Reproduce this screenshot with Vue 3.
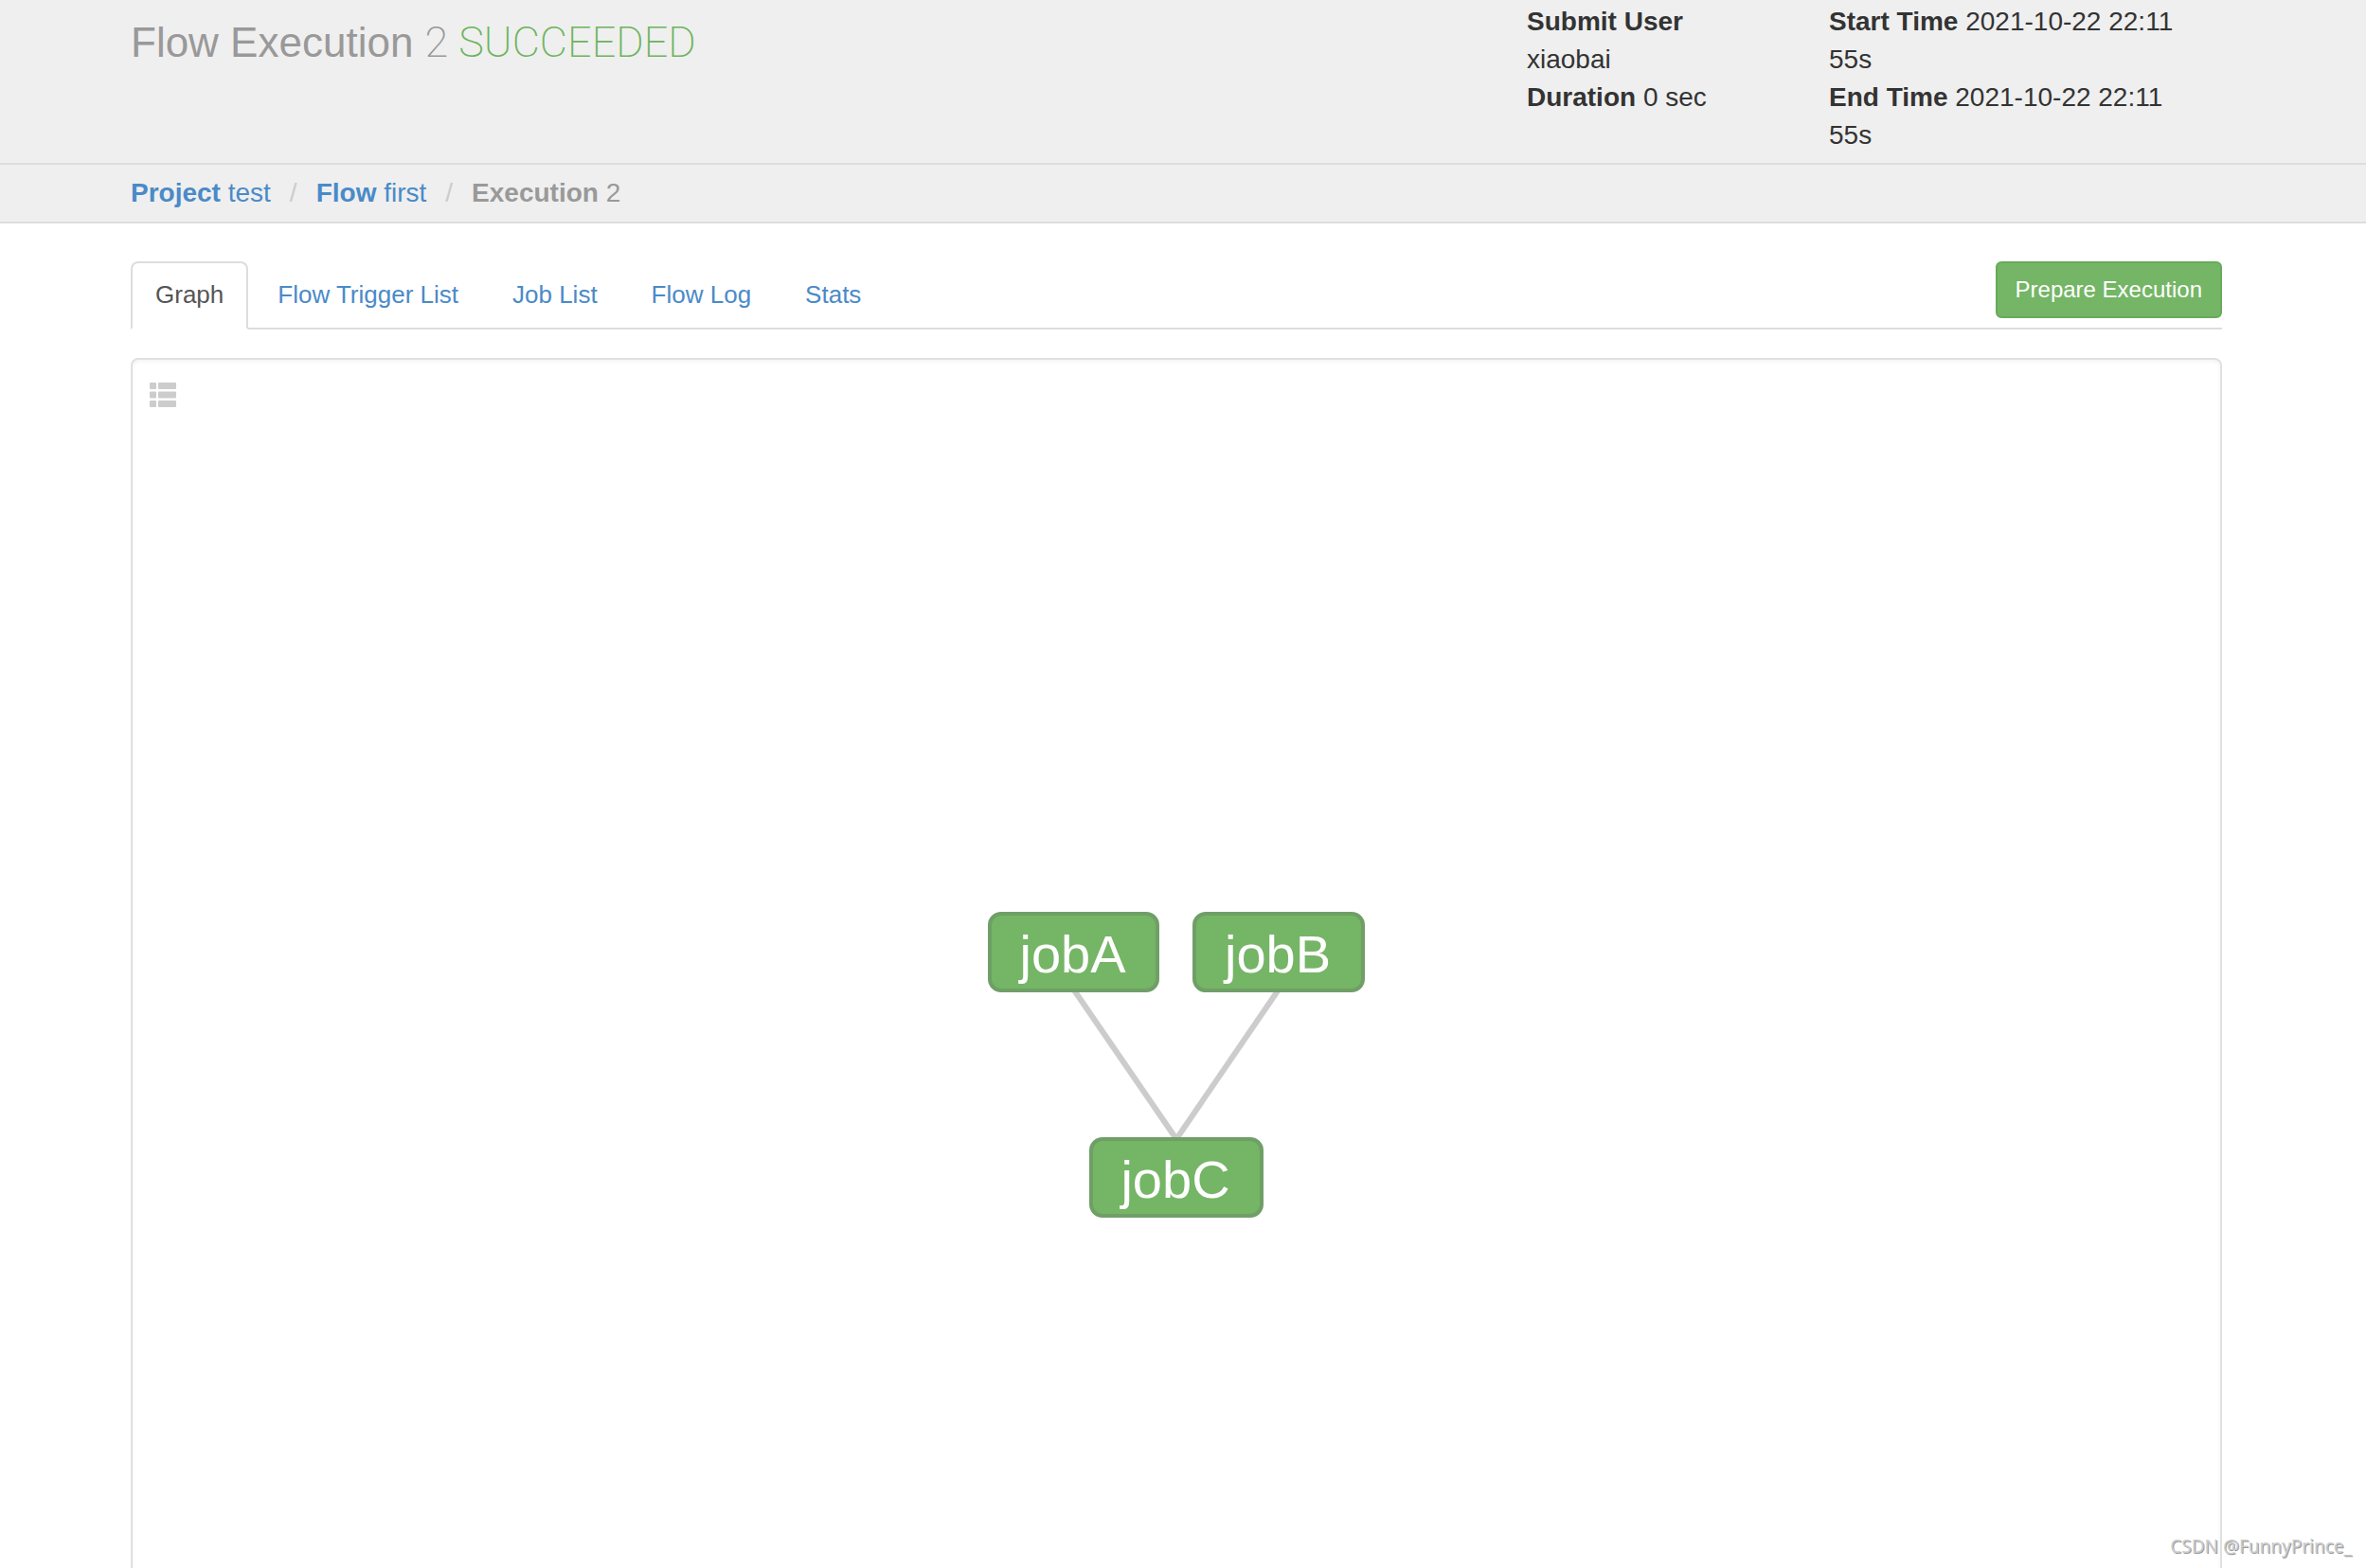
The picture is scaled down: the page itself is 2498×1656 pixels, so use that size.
<script setup>
import { ref } from 'vue'

const tabs = ['Graph', 'Flow Trigger List', 'Job List', 'Flow Log', 'Stats']
const active = ref('Graph')

const nodes = [
  { name: 'jobA', x: 4, y: 7, width: 177 },
  { name: 'jobB', x: 220, y: 7, width: 178 },
  { name: 'jobC', x: 111, y: 245, width: 180 }
]
</script>

<template>
  <div class="page">
    <header class="header">
      <h1 class="title">Flow Execution <small>2 <span class="succeeded">SUCCEEDED</span></small></h1>
      <div class="meta user">
        <p><strong>Submit User</strong><br>xiaobai</p>
        <p><strong>Duration</strong> 0 sec</p>
      </div>
      <div class="meta times">
        <p><strong>Start Time</strong> 2021-10-22 22:11 55s</p>
        <p><strong>End Time</strong> 2021-10-22 22:11 55s</p>
      </div>
    </header>

    <nav class="crumbs">
      <a href="#project"><strong>Project</strong> test</a>
      <span class="slash">/</span>
      <a href="#flow"><strong>Flow</strong> first</a>
      <span class="slash">/</span>
      <span class="current"><strong>Execution</strong> 2</span>
    </nav>

    <main class="content">
      <div class="toolbar">
        <nav class="tabs">
          <a
            v-for="tab in tabs"
            :key="tab"
            href="#"
            class="tab"
            :class="{ active: tab === active }"
            @click.prevent="active = tab"
          >{{ tab }}</a>
        </nav>
        <button type="button" class="prepare">Prepare Execution</button>
      </div>

      <section class="panel">
        <button type="button" class="toggle" aria-label="Toggle job list">
          <svg width="28" height="26" viewBox="0 0 28 26" fill="#ccc" aria-hidden="true">
            <rect x="0" y="0" width="7" height="7" rx="1" />
            <rect x="9" y="0" width="19" height="7" rx="1" />
            <rect x="0" y="9.5" width="7" height="7" rx="1" />
            <rect x="9" y="9.5" width="19" height="7" rx="1" />
            <rect x="0" y="19" width="7" height="7" rx="1" />
            <rect x="9" y="19" width="19" height="7" rx="1" />
          </svg>
        </button>
        <svg class="graph" width="402" height="330" viewBox="0 0 402 330">
          <path class="edge" d="M92.5 87 L201 245" />
          <path class="edge" d="M309 87 L201 245" />
          <g v-for="node in nodes" :key="node.name">
            <rect class="node" :x="node.x" :y="node.y" :width="node.width" height="81" rx="12" />
            <text class="label" :x="node.x + node.width / 2 - 1" :y="node.y + 62">{{ node.name }}</text>
          </g>
        </svg>
      </section>
    </main>

    <div class="watermark">CSDN @FunnyPrince_</div>
  </div>
</template>

<style>
body {
  margin: 0;
  background: #fff;
}
</style>

<style scoped>
.page {
  height: 100vh;
  overflow: hidden;
  position: relative;
  font-family: "Liberation Sans", Arial, sans-serif;
  font-size: 28px;
  line-height: 40px;
  color: #333;
}

.header,
.crumbs,
.content {
  padding-left: 138px;
  padding-right: 152px;
}

.header {
  display: flex;
  background: #efefef;
  border-bottom: 2px solid #ddd;
  padding-top: 3px;
  padding-bottom: 9px;
}

.title {
  flex: 1;
  margin: 0;
  padding-top: 18px;
  font-size: 44px;
  line-height: 48px;
  font-weight: 400;
  color: #999;
}

.title small {
  font-family: Roboto, sans-serif;
  font-size: 45px;
  font-weight: 200;
}

.succeeded {
  color: #6cb45c;
}

.meta p {
  margin: 0;
}

.user {
  width: 319px;
}

.times {
  width: 400px;
  padding-right: 15px;
}

.crumbs {
  display: flex;
  background: #efefef;
  border-bottom: 2px solid #ddd;
  padding-top: 10px;
  padding-bottom: 10px;
}

a {
  color: #4a8ac8;
  text-decoration: none;
}

.slash {
  padding: 0 20px;
  color: #ccc;
}

.current {
  color: #999;
}

.content {
  padding-top: 40px;
}

.toolbar {
  display: flex;
  justify-content: space-between;
  align-items: flex-start;
  border-bottom: 2px solid #ddd;
}

.tabs {
  display: flex;
  gap: 5px;
  margin-bottom: -2px;
}

.tab {
  padding: 15px 24px 17px;
  border: 2px solid transparent;
  border-radius: 8px 8px 0 0;
  font-size: 26px;
  line-height: 36px;
}

.tab.active {
  color: #555;
  background: #fff;
  border-color: #ddd #ddd #fff;
}

.prepare {
  padding: 0 19px;
  height: 60px;
  border: 2px solid #67ab58;
  border-radius: 6px;
  background: #75b566;
  color: #fff;
  font-family: inherit;
  font-size: 24px;
}

.panel {
  position: relative;
  display: flex;
  align-items: center;
  justify-content: center;
  box-sizing: border-box;
  height: 90vh;
  margin-top: 30px;
  border: 2px solid #e0e0e0;
  border-radius: 8px;
  box-shadow: inset 0 2px 4px rgba(0, 0, 0, 0.05);
}

.toggle {
  position: absolute;
  top: 24px;
  left: 18px;
  padding: 0;
  border: 0;
  background: none;
}

.toggle svg {
  display: block;
}

.edge {
  fill: none;
  stroke: #ccc;
  stroke-width: 6;
}

.node {
  fill: #75b566;
  stroke: #6f9f67;
  stroke-width: 4;
}

.label {
  fill: #fff;
  font-size: 56px;
  text-anchor: middle;
}

.watermark {
  position: absolute;
  right: 15px;
  bottom: 9px;
  font-family: "Noto Sans", sans-serif;
  font-size: 19px;
  line-height: 28px;
  color: #ccc;
  text-shadow: 1px 1px 0 #999;
}
</style>
